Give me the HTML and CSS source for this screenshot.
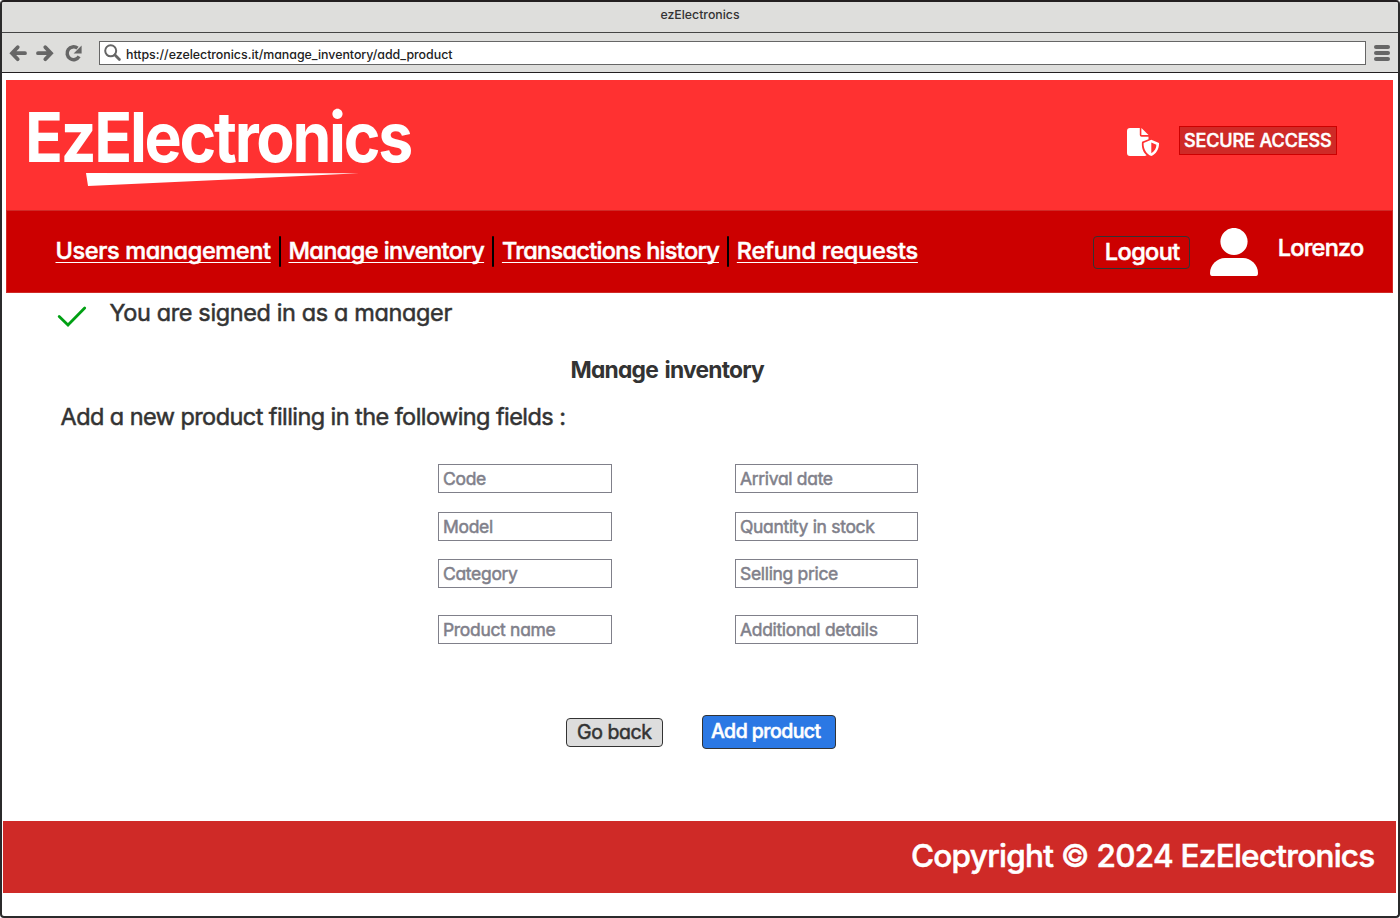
FILE: index.html
```html
<!DOCTYPE html>
<html lang="en">
<head>
<meta charset="utf-8">
<title>ezElectronics</title>
<link rel="stylesheet" href="styles.css">
</head>
<body>
<div class="window">
  <div class="titlebar">ezElectronics</div>
  <div class="toolbar">
    <svg class="nav-icons" width="90" height="38" viewBox="0 0 90 38" fill="none" stroke="#666" stroke-width="3.8" stroke-linecap="round">
      <path d="M10.3 19.2H23M15.7 13.2L10 19.2L15.7 25.2"/>
      <path d="M36 19.2H48.7M43.3 13.2L49 19.2L43.3 25.2"/>
      <path stroke-linecap="butt" stroke-width="3.5" d="M77.1 22.4A6.4 6.4 0 1 1 75.5 14.2"/>
      <path fill="#666" stroke="none" d="M79.6 11.5V19.4H71.6Z"/>
    </svg>
    <div class="address">
      <svg width="18" height="18" viewBox="0 0 18 18" fill="none" stroke="#666"><circle cx="6.7" cy="6.8" r="5.5" stroke-width="2"/><path d="M11 11L15.4 15.4" stroke-width="2.8" stroke-linecap="round"/></svg>
      <span>https://ezelectronics.it/manage_inventory/add_product</span>
    </div>
    <svg class="menu-icon" width="16" height="16" viewBox="0 0 16 16" fill="#666"><rect width="16" height="4" rx="2"/><rect y="6" width="16" height="4" rx="2"/><rect y="12" width="16" height="4" rx="2"/></svg>
  </div>
  <header class="header">
    <svg class="logo" width="600" height="130" viewBox="-11 -20 600 130" fill="#fff">
      <text class="logo-text" x="-2" y="61.8" textLength="386" lengthAdjust="spacingAndGlyphs">EzElectronics</text>
      <path d="M59 73L332 73.3L61 86Z"/>
    </svg>
    <div class="secure">
      <svg width="34" height="30" viewBox="0 0 34 30" fill="#fff">
        <path d="M3 1H12.8V8Q12.8 9.8 14.6 9.8H21.5V12.2L15 14.8C14.3 20.5 16 25.5 19.6 28.3Q18.8 29 17.5 29H3Q0 29 0 26V4Q0 1 3 1Z"/>
        <path d="M14.4 1L21.5 8H14.4Z"/>
        <path fill-rule="evenodd" d="M24.3 12.8L32 15.9C32.3 22 29 27 24.3 29C19.5 27 16.3 22 16.6 15.9ZM24.3 15.6V26.2C27.7 24.3 29.4 21.2 29.4 17.7Z"/>
      </svg>
      <span class="secure-label">SECURE ACCESS</span>
    </div>
  </header>
  <nav class="nav">
    <div class="links">
      <a class="users">Users management</a>
      <a class="inventory">Manage inventory</a>
      <a class="transactions">Transactions history</a>
      <a class="refunds">Refund requests</a>
    </div>
    <div class="account">
      <span class="logout">Logout</span>
      <svg width="48" height="48" viewBox="0 0 48 48" fill="#fff"><circle cx="24" cy="13.5" r="13.6"/><path d="M15 30H33C41 30 48 37 48 45Q48 48 46 48H2Q0 48 0 45C0 37 7 30 15 30Z"/></svg>
      <span class="user">Lorenzo</span>
    </div>
  </nav>
  <main class="main">
    <div class="status">
      <svg width="30" height="22" viewBox="0 0 30 22" fill="none" stroke="#00a013" stroke-width="2.8" stroke-linecap="round"><path d="M2.2 10.5L11 19L27.7 2"/></svg>
      <span>You are signed in as a manager</span>
    </div>
    <h1 class="heading">Manage inventory</h1>
    <p class="intro">Add a new product filling in the following fields :</p>
    <div class="fields">
      <div class="column">
        <div class="field">Code</div>
        <div class="field">Model</div>
        <div class="field">Category</div>
        <div class="field last">Product name</div>
      </div>
      <div class="column wide">
        <div class="field">Arrival date</div>
        <div class="field">Quantity in stock</div>
        <div class="field">Selling price</div>
        <div class="field last">Additional details</div>
      </div>
    </div>
    <div class="actions">
      <span class="back">Go back</span>
      <span class="add">Add product</span>
    </div>
  </main>
  <footer class="footer">Copyright © 2024 EzElectronics</footer>
</div>
</body>
</html>
```
FILE: styles.css
```css
* { box-sizing: border-box; }
body {
  margin: 0;
  background: #fff;
  color: #333;
  font-family: Inter, "Liberation Sans", sans-serif;
  font-feature-settings: "cv11";
  -webkit-text-stroke: 0.5px currentColor;
}
svg { display: block; flex: none; }
span, a { white-space: nowrap; }

.window {
  width: 1400px;
  height: 918px;
  border: 2px solid #2b2a2b;
  border-top-color: #231f20;
  border-radius: 4px;
  overflow: hidden;
  display: flex;
  flex-direction: column;
}
.titlebar {
  height: 31px;
  flex: none;
  padding-bottom: 6px;
  background: #dededc;
  border-bottom: 1px solid #444;
  display: flex;
  align-items: center;
  justify-content: center;
  font-size: 12.3px;
  font-weight: 500;
  -webkit-text-stroke: 0;
}
.toolbar {
  height: 40px;
  flex: none;
  background: #dededc;
  border-bottom: 1px solid #231f20;
  display: flex;
  align-items: center;
  padding-right: 8px;
}
.address {
  flex: 1;
  height: 24px;
  margin-left: 7px;
  margin-right: 8px;
  padding-left: 4px;
  border: 1px solid #666;
  background: #fff;
  display: flex;
  align-items: center;
  gap: 4px;
  font-size: 12.4px;
  font-weight: 500;
  letter-spacing: -0.02px;
  color: #222;
  -webkit-text-stroke: 0;
}
.address span { padding-top: 3px; }

.header {
  height: 130px;
  flex: none;
  margin: 7px 5px 0 4px;
  padding: 0 56px 0 10px;
  background: #ff3131;
  display: flex;
  justify-content: space-between;
}
.logo-text { font: 700 69px Inter, sans-serif; letter-spacing: -2.5px; -webkit-text-stroke: 0; }
.secure {
  height: 29px;
  margin-top: 46px;
  display: flex;
  align-items: center;
  gap: 18px;
}
.secure svg { margin-top: 3px; }
.secure-label {
  width: 158px;
  height: 29px;
  padding-left: 4px;
  border: 1px solid #c00;
  background: #cf2a27;
  color: #fff;
  font-size: 18px;
  font-weight: 500;
  line-height: 27px;
  letter-spacing: -0.11px;
}

.nav {
  height: 83px;
  flex: none;
  margin: 0 5px 0 4px;
  padding: 0 28.5px 0 48.5px;
  background: #c00;
  border: 1px solid #cf2a27;
  display: flex;
  justify-content: space-between;
  color: #fff;
  font-size: 23.5px;
  font-weight: 500;
}
.links { display: flex; gap: 17.8px; margin-top: 24px; height: 31px; }
.links a {
  position: relative;
  line-height: 31px;
  text-decoration: underline;
  text-decoration-thickness: 1.4px;
  text-underline-offset: 3px;
  text-decoration-skip-ink: none;
}
.links a + a::before {
  content: "";
  position: absolute;
  left: -9.6px;
  top: 1px;
  width: 2px;
  height: 31px;
  border-radius: 1px;
  background: #000;
}
.users { letter-spacing: -0.37px; }
.inventory { letter-spacing: -0.58px; }
.transactions { letter-spacing: -0.69px; }
.refunds { letter-spacing: -0.24px; }
.account { display: flex; margin-top: 17px; height: 48px; }
.logout {
  width: 97px;
  height: 33px;
  margin: 8px 20px 0 0;
  padding-left: 1px;
  border: 1px solid #333;
  border-radius: 4px;
  line-height: 30px;
  text-align: center;
  letter-spacing: -0.6px;
}
.user { margin-left: 19.5px; line-height: 39px; letter-spacing: -0.75px; }

.main { flex: 1; display: flex; flex-direction: column; font-size: 23.5px; }
.status {
  height: 38px;
  padding: 0 0 0 55px;
  display: flex;
  align-items: center;
  gap: 22.5px;
  line-height: 38px;
  letter-spacing: -0.38px;
}
.status span { padding-top: 2px; }
.status svg { margin-top: 10px; }
.heading {
  margin: 23px 0 0 568.5px;
  font-size: 22.8px;
  font-weight: 700;
  line-height: 31px;
  letter-spacing: -0.78px;
  word-spacing: 2px;
  -webkit-text-stroke: 0;
}
.intro { margin: 16px 0 0 58.5px; line-height: 31px; letter-spacing: -0.57px; }
.fields { display: flex; gap: 123px; margin: 32px 0 0 436px; }
.column { width: 174px; display: flex; flex-direction: column; gap: 18.5px; }
.wide { width: 183px; }
.field {
  height: 29px;
  padding-left: 4px;
  border: 1px solid #80808a;
  color: #80808a;
  font-size: 17.5px;
  line-height: 28px;
  letter-spacing: -0.32px;
}
.last { margin-top: 8.5px; }
.actions { display: flex; gap: 39px; margin: 71px 0 0 564px; align-items: center; }
.back, .add { border: 1px solid #333; border-radius: 4px; font-size: 19.5px; }
.back {
  width: 97px;
  height: 29px;
  padding-left: 10px;
  background: #ddd;
  line-height: 27px;
  letter-spacing: -0.42px;
}
.add {
  width: 134px;
  height: 34px;
  padding-left: 8px;
  background: #2b78e4;
  color: #fff;
  font-weight: 500;
  line-height: 31px;
  letter-spacing: -0.55px;
}

.footer {
  height: 72px;
  flex: none;
  margin: 0 2px 23px 1px;
  padding-right: 21.5px;
  background: #cf2a27;
  color: #fff;
  font-size: 31.5px;
  font-weight: 500;
  line-height: 70px;
  letter-spacing: -0.74px;
  text-align: right;
}
```
